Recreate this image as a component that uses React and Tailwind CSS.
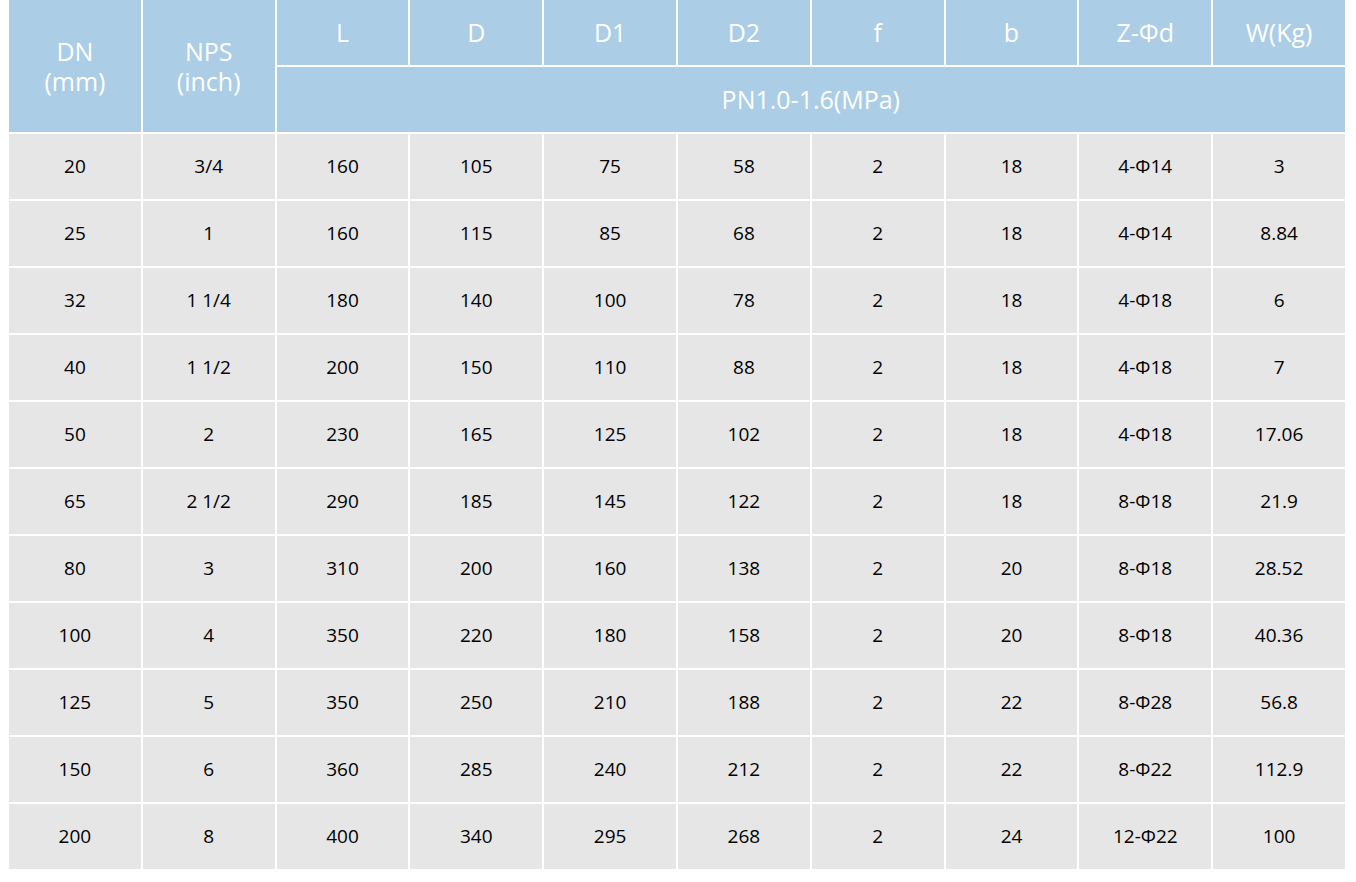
const cols = ['L', 'D', 'D1', 'D2', 'f', 'b', 'Z-Φd', 'W(Kg)'];

const rows = [
    ['20', '3/4', '160', '105', '75', '58', '2', '18', '4-Φ14', '3'],
    ['25', '1', '160', '115', '85', '68', '2', '18', '4-Φ14', '8.84'],
    ['32', '1 1/4', '180', '140', '100', '78', '2', '18', '4-Φ18', '6'],
    ['40', '1 1/2', '200', '150', '110', '88', '2', '18', '4-Φ18', '7'],
    ['50', '2', '230', '165', '125', '102', '2', '18', '4-Φ18', '17.06'],
    ['65', '2 1/2', '290', '185', '145', '122', '2', '18', '8-Φ18', '21.9'],
    ['80', '3', '310', '200', '160', '138', '2', '20', '8-Φ18', '28.52'],
    ['100', '4', '350', '220', '180', '158', '2', '20', '8-Φ18', '40.36'],
    ['125', '5', '350', '250', '210', '188', '2', '22', '8-Φ28', '56.8'],
    ['150', '6', '360', '285', '240', '212', '2', '22', '8-Φ22', '112.9'],
    ['200', '8', '400', '340', '295', '268', '2', '24', '12-Φ22', '100'],
];

export default function App() {
    return (
        <div className="min-h-[882px] bg-white pl-[9px] font-['Open_Sans',sans-serif]">
            <div className="grid w-[1336px] grid-cols-10 auto-rows-[65px] gap-[2px]">
                <div className="row-span-2 flex flex-col items-center justify-center bg-[#abcde5] text-[25px] leading-[30px] text-white">
                    <span>DN</span>
                    <span>(mm)</span>
                </div>
                <div className="row-span-2 flex flex-col items-center justify-center bg-[#abcde5] text-[25px] leading-[30px] text-white">
                    <span>NPS</span>
                    <span>(inch)</span>
                </div>
                {cols.map((c) => (
                    <div key={c} className="flex items-center justify-center bg-[#abcde5] text-[25px] text-white">
                        {c}
                    </div>
                ))}
                <div className="col-span-8 flex items-center justify-center bg-[#abcde5] text-[25px] text-white">
                    PN1.0-1.6(MPa)
                </div>
                {rows.map((row, i) =>
                    row.map((v, j) => (
                        <div key={i + '-' + j} className="flex items-center justify-center bg-[#e6e6e6] text-[19px] text-black">
                            {v}
                        </div>
                    ))
                )}
            </div>
        </div>
    );
}
